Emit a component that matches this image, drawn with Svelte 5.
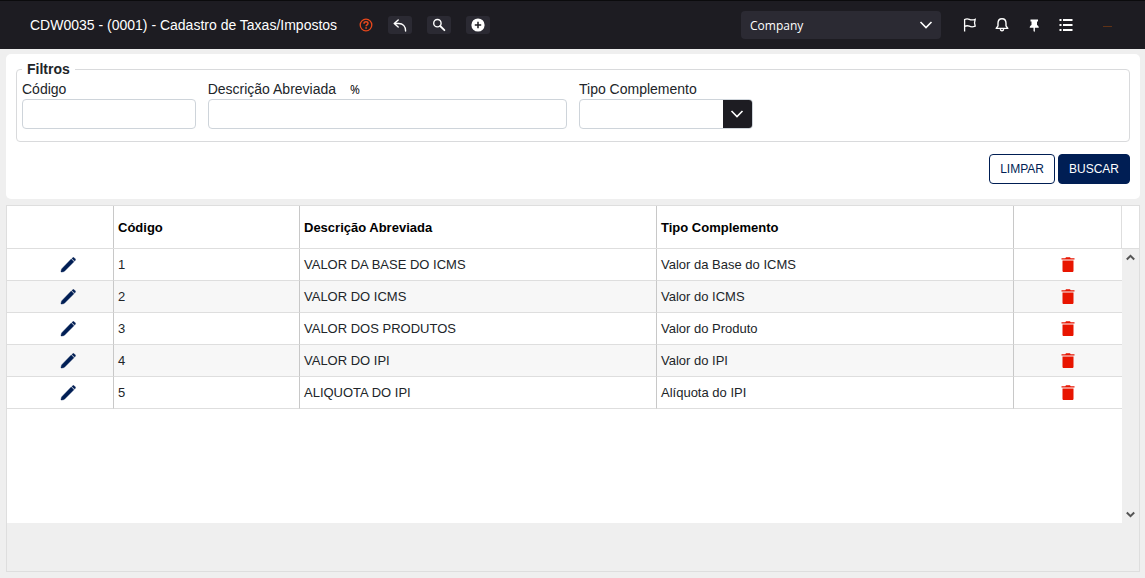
<script>
  const empresas = ['Company'];

  let empresa = $state('Company');
  let codigo = $state('');
  let descricao = $state('');
  let tipo = $state('');
  let filtro = $state({ codigo: '', descricao: '', tipo: '' });
  let lista;

  let taxas = $state([
    { codigo: 1, descricao: 'VALOR DA BASE DO ICMS', tipo: 'Valor da Base do ICMS' },
    { codigo: 2, descricao: 'VALOR DO ICMS', tipo: 'Valor do ICMS' },
    { codigo: 3, descricao: 'VALOR DOS PRODUTOS', tipo: 'Valor do Produto' },
    { codigo: 4, descricao: 'VALOR DO IPI', tipo: 'Valor do IPI' },
    { codigo: 5, descricao: 'ALIQUOTA DO IPI', tipo: 'Alíquota do IPI' }
  ]);

  let visiveis = $derived(
    taxas.filter(
      (t) =>
        (!filtro.codigo || String(t.codigo) === filtro.codigo) &&
        t.descricao.toLowerCase().includes(filtro.descricao.toLowerCase()) &&
        (!filtro.tipo || t.tipo === filtro.tipo)
    )
  );

  function buscar(e) {
    e.preventDefault();
    filtro = { codigo: codigo.trim(), descricao: descricao.trim(), tipo };
  }

  function limpar() {
    codigo = '';
    descricao = '';
    tipo = '';
    filtro = { codigo: '', descricao: '', tipo: '' };
  }

  function editar(taxa) {
    codigo = String(taxa.codigo);
    descricao = taxa.descricao;
    tipo = taxa.tipo;
  }

  function excluir(taxa) {
    taxas = taxas.filter((t) => t.codigo !== taxa.codigo);
  }
</script>

{#snippet colunas()}
  <colgroup>
    <col class="col-editar" />
    <col class="col-codigo" />
    <col />
    <col />
    <col class="col-excluir" />
  </colgroup>
{/snippet}

<div class="page">
  <header class="topbar">
    <h1 class="topbar__title">CDW0035 - (0001) - Cadastro de Taxas/Impostos</h1>
    <div class="tools">
      <button class="icon-btn" type="button" aria-label="Ajuda">
        <svg width="14" height="14" viewBox="0 0 14 14" fill="none" stroke="#e8481c">
          <circle cx="7" cy="7" r="5.8" stroke-width="1.3" />
          <path d="M5 5.7c0-1.2.8-1.9 2-1.9s2 .7 2 1.7c0 1.3-1.9 1.4-1.9 2.7" stroke-width="1.5" />
          <path d="M7.1 9.2v1.5" stroke-width="1.6" />
        </svg>
      </button>
      <button class="icon-btn icon-btn--box" type="button" aria-label="Voltar">
        <svg width="16" height="16" viewBox="0 0 16 16" fill="none" stroke="#fff" stroke-width="1.4">
          <path d="M6.2 2.9 2.2 6.5l4 3.6M2.4 6.5h4.4c4 0 6.8 3 6.8 7.500" stroke-linecap="round" stroke-linejoin="round" />
        </svg>
      </button>
      <button class="icon-btn icon-btn--box" type="button" aria-label="Pesquisar">
        <svg width="14" height="14" viewBox="0 0 14 14" fill="none" stroke="#fff">
          <circle cx="5.4" cy="5.2" r="3.7" stroke-width="1.4" />
          <path d="m8.2 8 4.2 4.2" stroke-width="1.8" stroke-linecap="round" />
        </svg>
      </button>
      <button class="icon-btn icon-btn--box" type="button" aria-label="Novo">
        <svg width="14" height="14" viewBox="0 0 14 14">
          <circle cx="7" cy="7" r="6.6" fill="#fff" />
          <path d="M7 3.8v6.4M3.8 7h6.4" stroke="#1d1c22" stroke-width="1.5" />
        </svg>
      </button>
    </div>

    <div class="company">
      <select class="company__select" aria-label="Empresa" bind:value={empresa}>
        {#each empresas as nome}
          <option value={nome}>{nome}</option>
        {/each}
      </select>
      <svg class="company__arrow" width="14" height="8" viewBox="0 0 14 8" fill="none" stroke="#fff" stroke-width="1.6">
        <path d="m1.5 1 5.5 5.5L12.5 1" />
      </svg>
    </div>

    <nav class="shortcuts">
      <button class="icon-btn" type="button" aria-label="Favoritos">
        <svg width="16" height="16" viewBox="0 0 16 16" fill="none" stroke="#fff" stroke-width="1.3">
          <path d="M2.6 14.5V2.5c1.6-.9 3.2-.9 4.7-.2s3.600.8 5.900 0L12.500 5.800l.7 3.400c-2.200.8-4.400.7-5.900 0s-3.100-.6-4.700.2" />
        </svg>
      </button>
      <button class="icon-btn" type="button" aria-label="Notificações">
        <svg width="16" height="16" viewBox="0 0 16 16" fill="none" stroke="#fff" stroke-width="1.4">
          <path d="M2.2 11.4 4 8.8V6.3C4 3.6 5.6 1.7 8 1.7s4 1.9 4 4.6v2.5l1.8 2.6Z" stroke-linejoin="round" />
          <path d="M6.3 12.2c.2 1.2.9 1.7 1.7 1.7s1.5-.5 1.7-1.7" />
        </svg>
      </button>
      <button class="icon-btn" type="button" aria-label="Fixar">
        <svg width="16" height="16" viewBox="0 0 16 16" fill="#fff">
          <path d="M4.5 2.500h7.500v2h-1v3.500c1.100.5 1.700 1.300 1.800 2.700H8.900v3l-.7 1.500-.7-1.500v-3H3.700c.1-1.400.7-2.200 1.800-2.700V4.500h-1Z" />
        </svg>
      </button>
      <button class="icon-btn" type="button" aria-label="Menu">
        <svg width="16" height="16" viewBox="0 0 16 16" fill="#fff">
          <path d="M1.500 2h2v2h-2zM1.500 7h2v2h-2zM1.500 12h2v2h-2zM5 2h9.500v2H5zM5 7h9.500v2H5zM5 12h9.500v2H5z" />
        </svg>
      </button>
    </nav>
    <button class="icon-btn" type="button" aria-label="Minimizar">
      <svg width="10" height="10" viewBox="0 0 10 10">
        <path d="M0 6.500h9" stroke="#5f3216" />
      </svg>
    </button>
  </header>

  <main class="content">
    <form class="panel" onsubmit={buscar}>
      <fieldset class="filters">
        <legend class="filters__legend">Filtros</legend>
        <div class="filters__grid">
          <div class="field">
            <label class="field__label" for="codigo">Código</label>
            <input class="input" id="codigo" bind:value={codigo} />
          </div>
          <div class="field field--wide">
            <label class="field__label" for="descricao">Descrição Abreviada <span class="field__hint">%</span></label>
            <input class="input" id="descricao" bind:value={descricao} />
          </div>
          <div class="field">
            <label class="field__label" for="tipo">Tipo Complemento</label>
            <div class="combo">
              <select class="combo__select" id="tipo" bind:value={tipo}>
                <option value=""></option>
                {#each taxas as taxa}
                  <option value={taxa.tipo}>{taxa.tipo}</option>
                {/each}
              </select>
              <span class="combo__arrow">
                <svg width="14" height="8" viewBox="0 0 14 8" fill="none" stroke="#fff" stroke-width="1.6">
                  <path d="m1.5 1 5.5 5.5L12.5 1" />
                </svg>
              </span>
            </div>
          </div>
        </div>
      </fieldset>
      <div class="actions">
        <button class="btn" type="button" onclick={limpar}>LIMPAR</button>
        <button class="btn btn--primary" type="submit">BUSCAR</button>
      </div>
    </form>

    <section class="grid">
      <div class="grid__head">
        <table class="table">
          {@render colunas()}
          <thead>
            <tr>
              <th></th>
              <th>Código</th>
              <th>Descrição Abreviada</th>
              <th>Tipo Complemento</th>
              <th></th>
            </tr>
          </thead>
        </table>
      </div>
      <div class="grid__body">
        <div class="grid__rows" bind:this={lista}>
          <table class="table">
            {@render colunas()}
            <tbody>
              {#each visiveis as taxa (taxa.codigo)}
                <tr>
                  <td class="editar">
                    <button class="icon-btn" type="button" aria-label="Editar" onclick={() => editar(taxa)}>
                      <svg width="16" height="16" viewBox="0 0 16 16" fill="#001e54">
                        <path d="m11.900 1.500.8-.8c.4-.4 1-.4 1.400 0l1.200 1.200c.4.4.4 1 0 1.400l-.8.8ZM11.200 2.100l2.700 2.700-9.200 9.200c-.4.400-.8.600-1.300.7l-1.700.4c-.5.100-.8-.200-.7-.7l.4-1.700c.1-.5.300-.9.700-1.300Z" stroke="#001e54" stroke-width=".4" />
                      </svg>
                    </button>
                  </td>
                  <td>{taxa.codigo}</td>
                  <td>{taxa.descricao}</td>
                  <td>{taxa.tipo}</td>
                  <td>
                    <button class="icon-btn" type="button" aria-label="Excluir" onclick={() => excluir(taxa)}>
                      <svg width="14" height="16" viewBox="0 0 14 16" fill="#e81500">
                        <path d="M.5 1.200h3.800l.7-1h4l.7 1h3.800v1.300H.5ZM1.500 3.500h11V13.700c0 .8-.5 1.300-1.300 1.300H2.800c-.8 0-1.300-.5-1.300-1.300Z" />
                      </svg>
                    </button>
                  </td>
                </tr>
              {/each}
            </tbody>
          </table>
        </div>
        <div class="rail">
          <button class="rail__btn" type="button" aria-label="Rolar para cima" onclick={() => lista.scrollBy(0, -32)}>
            <svg width="9" height="7" viewBox="0 0 9 7" fill="none" stroke="#555" stroke-width="2">
              <path d="m.8 5.500 3.700-3.700 3.700 3.700" />
            </svg>
          </button>
          <button class="rail__btn" type="button" aria-label="Rolar para baixo" onclick={() => lista.scrollBy(0, 32)}>
            <svg width="9" height="7" viewBox="0 0 9 7" fill="none" stroke="#555" stroke-width="2">
              <path d="m.8 1.500 3.700 3.700 3.700-3.700" />
            </svg>
          </button>
        </div>
      </div>
      <div class="grid__foot"></div>
    </section>
  </main>
</div>

<style>
  :global(body) {
    background: #efefef;
  }

  .page {
    display: flex;
    flex-direction: column;
    min-height: 100vh;
    font-family: 'Liberation Sans', Arial, sans-serif;
    font-size: 14px;
    color: #212529;
  }

  .page * {
    box-sizing: border-box;
  }

  button,
  input,
  select {
    font-family: inherit;
    margin: 0;
  }

  .topbar {
    display: flex;
    align-items: center;
    height: 49px;
    padding: 0 32px 0 30px;
    border-top: 1px solid #0b0b0d;
    background: #1d1c22;
    color: #fff;
  }

  .topbar__title {
    margin: 0;
    font-size: 14px;
    font-weight: 400;
    white-space: nowrap;
  }

  .tools {
    display: flex;
    align-items: center;
    gap: 15px;
    flex: 1;
    margin-left: 22px;
  }

  .icon-btn {
    display: flex;
    align-items: center;
    justify-content: center;
    padding: 0;
    border: none;
    background: transparent;
    cursor: pointer;
  }

  .icon-btn--box {
    width: 24px;
    height: 18px;
    border-radius: 3px;
    background: #2b2a33;
  }

  .company {
    display: grid;
    align-items: center;
    width: 200px;
  }

  .company__select,
  .company__arrow {
    grid-area: 1 / 1;
  }

  .company__select {
    appearance: none;
    height: 28px;
    padding: 0 9px;
    border: none;
    border-radius: 4px;
    background: #2b2a33;
    color: #fff;
    font-family: 'Open Sans', sans-serif;
    font-size: 12px;
  }

  .company__arrow {
    justify-self: end;
    margin-right: 8px;
    pointer-events: none;
  }

  .shortcuts {
    display: flex;
    gap: 16px;
    margin: 0 29px 0 21px;
  }

  .content {
    display: flex;
    flex-direction: column;
    flex: 1;
    gap: 6px;
    padding: 5px 5px 6px 6px;
  }

  .panel {
    padding: 7px 10px 15px;
    border-radius: 5px;
    background: #fff;
  }

  .filters {
    min-width: 0;
    margin: 0;
    padding: 0 5px 12px;
    border: 1px solid #d9dadc;
    border-radius: 4px;
  }

  .filters__legend {
    padding: 0 5px;
    font-weight: 700;
    line-height: 16px;
  }

  .filters__grid {
    display: grid;
    grid-template-columns: repeat(12, 1fr);
    gap: 12px;
    padding-top: 4px;
  }

  .field {
    display: flex;
    flex-direction: column;
    grid-column: span 2;
    gap: 2px;
  }

  .field--wide {
    grid-column: span 4;
  }

  .field__label {
    line-height: 16px;
    white-space: nowrap;
  }

  .field__hint {
    margin-left: 10px;
    font-family: 'Open Sans', sans-serif;
    font-size: 12px;
    line-height: 1;
    color: #000;
  }

  .input,
  .combo {
    width: 100%;
    height: 30px;
    border: 1px solid #ced4da;
    border-radius: 4px;
    background: #fff;
  }

  .input {
    padding: 0 6px;
    font-size: 13px;
  }

  .combo {
    display: grid;
    overflow: hidden;
  }

  .combo__select,
  .combo__arrow {
    grid-area: 1 / 1;
  }

  .combo__select {
    appearance: none;
    width: 100%;
    padding: 0 36px 0 6px;
    border: none;
    background: transparent;
    font-size: 13px;
  }

  .combo__arrow {
    display: flex;
    align-items: center;
    justify-content: center;
    justify-self: end;
    width: 29px;
    background: #1d1c22;
    pointer-events: none;
  }

  .actions {
    display: flex;
    justify-content: flex-end;
    gap: 3px;
    margin-top: 12px;
  }

  .btn {
    height: 30px;
    padding: 0 10px;
    border: 1px solid #001e54;
    border-radius: 4px;
    background: #fff;
    color: #001e54;
    font-size: 12px;
    cursor: pointer;
  }

  .btn--primary {
    background: #001e54;
    color: #fff;
  }

  .grid {
    display: flex;
    flex-direction: column;
    flex: 1;
    border: 1px solid #dedede;
  }

  .grid__head {
    padding-right: 17px;
    border-bottom: 1px solid #dedede;
    background: #fff;
  }

  .grid__body {
    display: flex;
    flex: 1;
  }

  .grid__rows {
    flex: 1;
    overflow: hidden;
    background: #fff;
  }

  .grid__foot {
    height: 48px;
  }

  .table {
    width: 100%;
    table-layout: fixed;
    border-collapse: separate;
    border-spacing: 0;
    font-size: 13px;
    color: #000;
  }

  .col-editar {
    width: 107px;
  }

  .col-codigo {
    width: 186px;
  }

  .col-excluir {
    width: 108px;
  }

  th,
  td {
    padding: 0 4px;
    border-right: 1px solid #c8c8c8;
    text-align: left;
  }

  th {
    height: 42px;
  }

  th:last-child {
    border-right-color: #dedede;
  }

  td {
    height: 32px;
    border-bottom: 1px solid #dedede;
    color: #212529;
  }

  td:last-child {
    border-right: none;
  }

  tbody tr:nth-child(even) {
    background: #f7f7f7;
  }

  td .icon-btn {
    margin: 0 auto;
  }

  .editar {
    padding-left: 20px;
  }

  .rail {
    display: flex;
    flex-direction: column;
    justify-content: space-between;
    width: 17px;
    background: #efefef;
  }

  .rail__btn {
    display: flex;
    align-items: center;
    justify-content: center;
    height: 17px;
    padding: 0;
    border: none;
    background: transparent;
  }
</style>
